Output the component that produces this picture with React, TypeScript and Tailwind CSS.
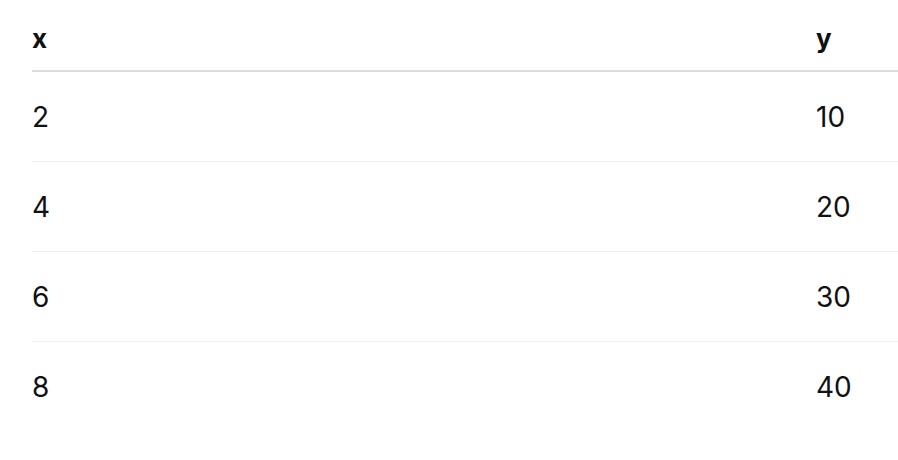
const rows = [
  { x: 2, y: 10 },
  { x: 4, y: 20 },
  { x: 6, y: 30 },
  { x: 8, y: 40 },
];

export default function App() {
  return (
    <div className="w-[898px] h-[460px] bg-white pl-8 font-['Inter',sans-serif] text-[#111]">
      <div className="flex h-[72px] items-center border-b-2 border-[#dcdcdc] text-[26px] font-bold pt-1.5">
        <div className="flex-1">x</div>
        <div className="w-[82px]">y</div>
      </div>
      {rows.map((r, i) => (
        <div
          key={r.x}
          className={`flex h-[90px] items-center text-[28px] ${i < rows.length - 1 ? "border-b border-[#efefef]" : ""}`}
        >
          <div className="flex-1">{r.x}</div>
          <div className="w-[82px]">{r.y}</div>
        </div>
      ))}
    </div>
  );
}
